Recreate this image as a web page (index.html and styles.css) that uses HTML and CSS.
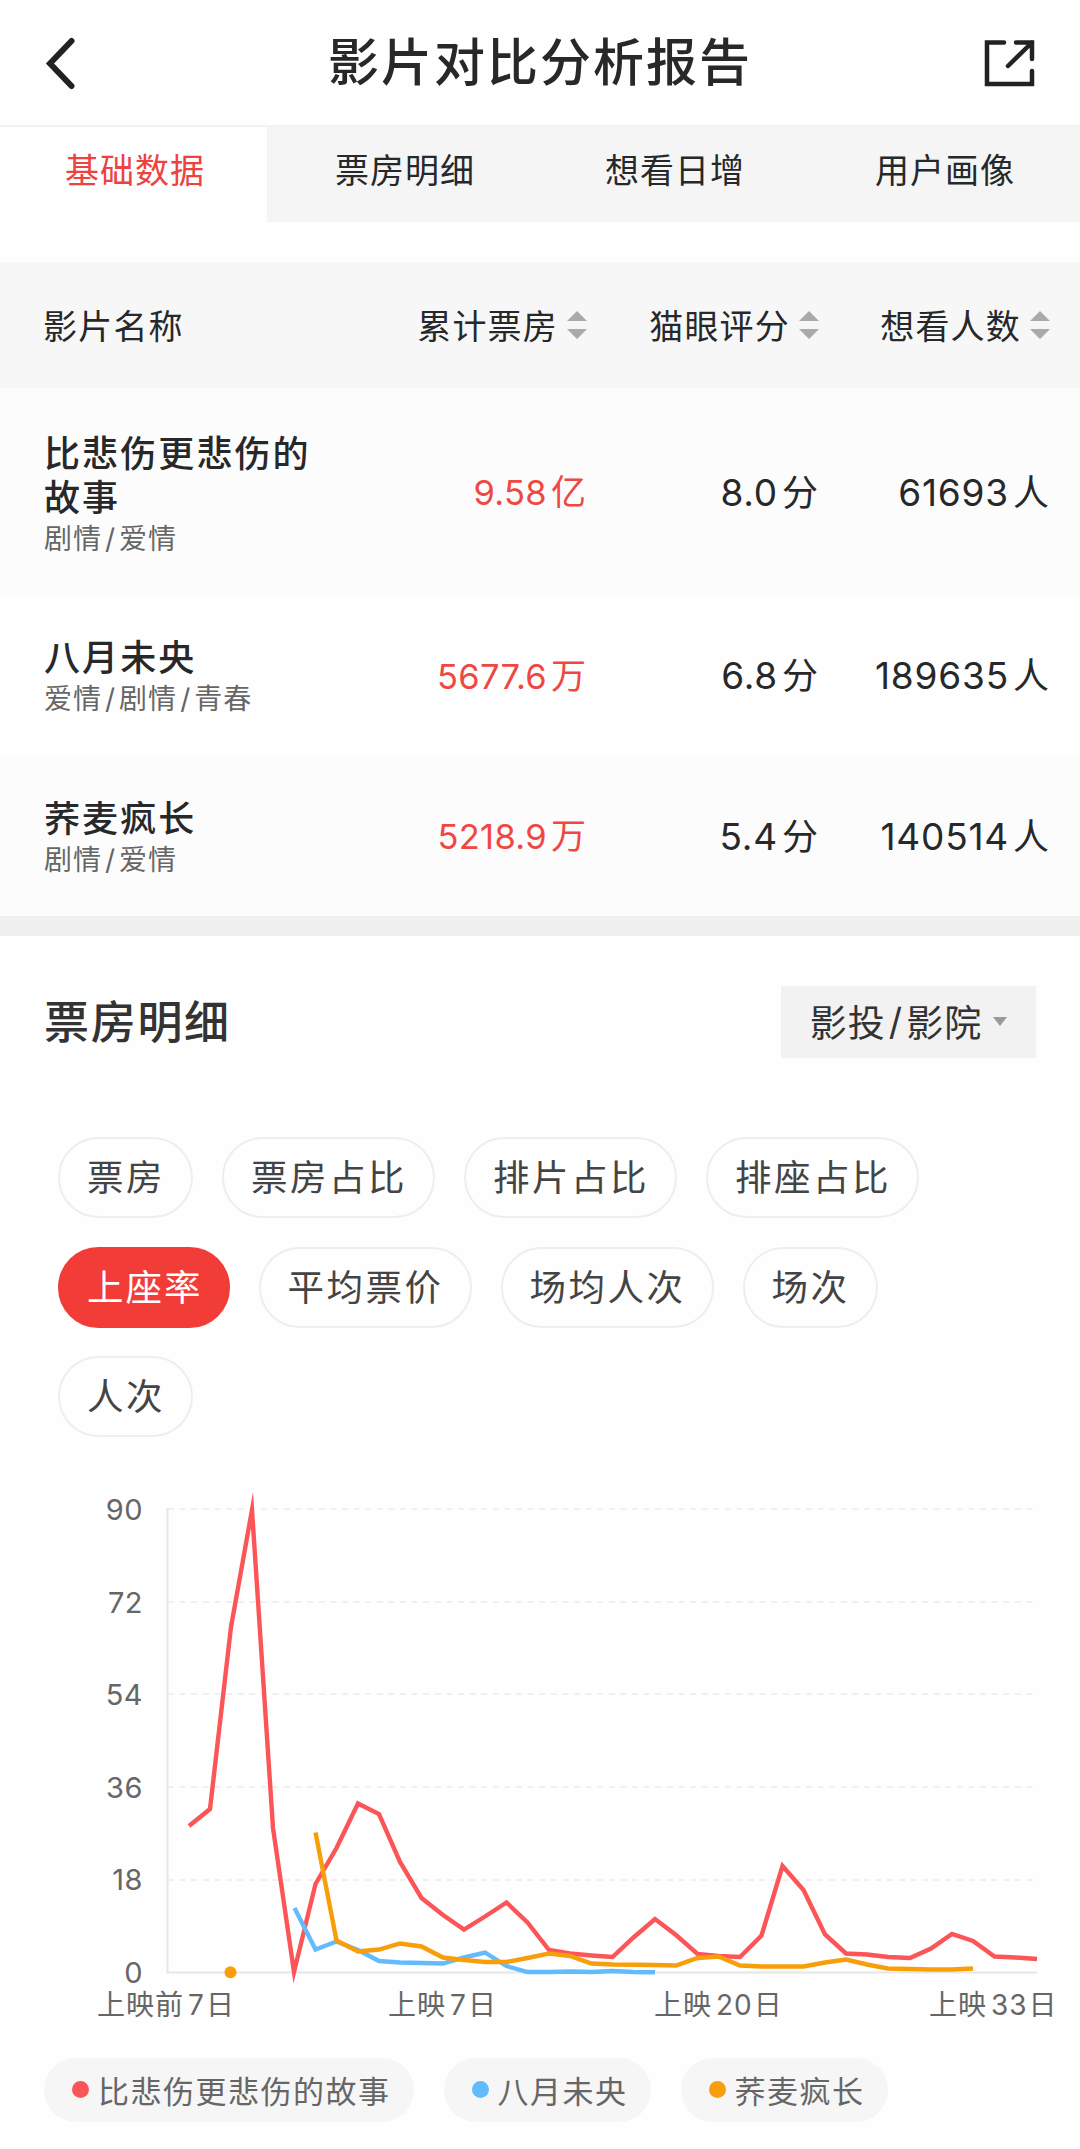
FILE: index.html
```html
<!DOCTYPE html>
<html lang="zh-CN">

<head>
  <meta charset="UTF-8">
  <meta name="viewport" content="width=device-width, initial-scale=1.0">
  <title>影片对比分析报告</title>
  <link rel="stylesheet" href="styles.css">
</head>

<body>
  <header class="topbar">
    <svg class="icon-back" viewBox="0 0 32 54"><path d="M27.5 5 L6 27.5 L27.5 50"/></svg>
    <h1>影片对比分析报告</h1>
    <svg class="icon-share" viewBox="0 0 54 54"><path d="M20 6.5 H3 V48 H48 V35 M32 6.5 H48 V23 M48 6.5 L24 30"/></svg>
  </header>

  <nav class="tabs">
    <a class="tab active">基础数据</a>
    <a class="tab">票房明细</a>
    <a class="tab">想看日增</a>
    <a class="tab">用户画像</a>
  </nav>

  <!-- 影片对比表 -->
  <section class="films">
    <div class="row head">
      <div>影片名称</div>
      <div class="sort">累计票房<i></i></div>
      <div class="sort">猫眼评分<i></i></div>
      <div class="sort">想看人数<i></i></div>
    </div>
    <div class="row tall">
      <div class="film">
        <h3>比悲伤更悲伤的故事</h3>
        <p>剧情<b>/</b>爱情</p>
      </div>
      <div class="num red">9.58<span>亿</span></div>
      <div class="num">8.0<span>分</span></div>
      <div class="num">61693<span>人</span></div>
    </div>
    <div class="row">
      <div class="film">
        <h3>八月未央</h3>
        <p>爱情<b>/</b>剧情<b>/</b>青春</p>
      </div>
      <div class="num red">5677.6<span>万</span></div>
      <div class="num">6.8<span>分</span></div>
      <div class="num">189635<span>人</span></div>
    </div>
    <div class="row">
      <div class="film">
        <h3>荞麦疯长</h3>
        <p>剧情<b>/</b>爱情</p>
      </div>
      <div class="num red">5218.9<span>万</span></div>
      <div class="num">5.4<span>分</span></div>
      <div class="num">140514<span>人</span></div>
    </div>
  </section>

  <!-- 票房明细 -->
  <section class="detail">
    <div class="detail-head">
      <h2>票房明细</h2>
      <button class="select">影投<b>/</b>影院<i></i></button>
    </div>

    <div class="chips">
      <span class="chip">票房</span>
      <span class="chip">票房占比</span>
      <span class="chip">排片占比</span>
      <span class="chip">排座占比</span>
      <span class="chip on">上座率</span>
      <span class="chip">平均票价</span>
      <span class="chip">场均人次</span>
      <span class="chip">场次</span>
      <span class="chip">人次</span>
    </div>

    <svg class="chart" viewBox="0 1480 1080 560">
      <g class="grid">
        <path d="M168 1509 H1037"/>
        <path d="M168 1602 H1037"/>
        <path d="M168 1694 H1037"/>
        <path d="M168 1787 H1037"/>
        <path d="M168 1880 H1037"/>
      </g>
      <path class="axis" d="M167.5 1508 V1972.5 H1037"/>

      <g class="ylabels">
        <text x="143" y="1520">90</text>
        <text x="143" y="1613">72</text>
        <text x="143" y="1705">54</text>
        <text x="143" y="1798">36</text>
        <text x="143" y="1890">18</text>
        <text x="143" y="1983">0</text>
      </g>
      <g class="xlabels">
        <text x="97" y="2015">上映前<tspan dx="4">7</tspan><tspan dx="1">日</tspan></text>
        <text x="388" y="2015">上映<tspan dx="4">7</tspan><tspan dx="1">日</tspan></text>
        <text x="654" y="2015">上映<tspan dx="4">20</tspan><tspan dx="1">日</tspan></text>
        <text x="929" y="2015">上映<tspan dx="4">33</tspan><tspan dx="1">日</tspan></text>
      </g>

      <polyline class="line red-line" points="189,1826 210,1809 231,1627 252,1510 273,1828 294,1972 315.5,1884 336.5,1848 358,1803.5 379,1814 400,1862 421.5,1898 443,1915 464,1929.5 485,1916.5 506.5,1902.5 527.5,1922.5 549,1950 570,1953.5 591.5,1955.5 612.5,1957 633.5,1937.5 655,1919 676,1935 697.5,1954 718.5,1956 740,1957 761.5,1935.5 782.5,1866 803.5,1890 825,1934.5 846,1953.5 867,1954.5 888,1957 910,1958 931,1948.5 952,1934 973,1941 994.5,1956.5 1015.5,1957.5 1037,1959"/>
      <polyline class="line blue-line" points="294.5,1908 315.5,1949.5 336.5,1941.5 358,1950 379,1961 400,1962.5 421.5,1963 443,1963.5 464,1957.5 485,1952.5 506.5,1966 527.5,1972 549,1972 570,1971.5 591.5,1972 612.5,1971 633.5,1972 655,1972.3"/>
      <polyline class="line orange-line" points="315.5,1832.5 336.5,1940.5 358,1951.5 379,1949.5 400,1943.5 421.5,1946.5 443,1957.5 464,1960 485,1962 506.5,1962 527.5,1958 549,1953.5 570,1956 591.5,1963.5 612.5,1964.5 655,1965 676,1965.5 697.5,1958 718.5,1956.5 740,1965.5 761.5,1966.5 803.5,1966.5 825,1962.5 846,1959.5 867,1964.5 888,1968.5 931,1969.5 952,1969.5 973,1968.5"/>
      <circle class="dot" cx="230.5" cy="1972.3" r="6"/>
    </svg>

    <div class="legend">
      <span class="legend-item c-red">比悲伤更悲伤的故事</span>
      <span class="legend-item c-blue">八月未央</span>
      <span class="legend-item c-orange">荞麦疯长</span>
    </div>
  </section>
</body>

</html>
```

FILE: styles.css
```css
* {
  box-sizing: border-box;
  margin: 0;
  padding: 0;
}

body {
  width: 1080px;
  height: 2149px;
  overflow: hidden;
  background: #fefefe;
  color: #26282a;
  font-family: Inter, "Noto Sans CJK SC", sans-serif;
}

b {
  margin: 0 3px;
  font-weight: 400;
}

/* top bar */
.topbar {
  display: flex;
  align-items: center;
  justify-content: space-between;
  height: 127px;
  padding: 0 42px 0 44px;
  border-bottom: 2px solid #f2f2f2;
}

.topbar svg {
  fill: none;
  stroke: #222;
  stroke-width: 4.5;
  stroke-linecap: round;
}

.topbar .icon-back {
  width: 32px;
  height: 54px;
  stroke-width: 6;
}

.icon-share {
  width: 54px;
  height: 54px;
}

h1 {
  margin-left: 20px;
  font-size: 51px;
  font-weight: 500;
  letter-spacing: 2px;
  line-height: 60px;
}

.tabs {
  display: flex;
  height: 95px;
  background: #f5f5f5;
}

.tab {
  width: 270px;
  padding-top: 19px;
  font-size: 34px;
  line-height: 50px;
  letter-spacing: 1px;
  text-align: center;
}

.tab.active {
  width: 267px;
  margin-right: 3px;
  padding-left: 3px;
  background: #fefefe;
  color: #ec4240;
}

/* film table */
.films {
  margin-top: 40px;
  border-bottom: 20px solid #f0f0f0;
}

.row {
  display: grid;
  grid-template-columns: 322px 220px 232px 231px;
  align-items: center;
  height: 160.5px;
  padding-left: 44px;
}

.row.head {
  height: 126px;
  padding: 0 0 2px 43px;
  grid-template-columns: 324px 220px 232px 231px;
  background: #f7f7f7;
  font-size: 34px;
  letter-spacing: 1.2px;
}

.row.tall {
  height: 207px;
}

.row:nth-child(even) {
  background: #fcfcfc;
}

.film {
  padding-top: 4px;
}

.tall .film {
  padding-top: 6px;
}

.film h3 {
  width: 275px;
  font-size: 36px;
  font-weight: 500;
  line-height: 44px;
  letter-spacing: 2.1px;
}

.film p {
  color: #666;
  font-size: 28px;
  line-height: 38px;
  letter-spacing: 1px;
}

.sort {
  display: flex;
  align-items: center;
  justify-content: flex-end;
}

.sort i {
  width: 20px;
  height: 28px;
  margin: 2px 0 0 9px;
  background: #aaa;
  clip-path: polygon(50% 0, 100% 36%, 0 36%, 0 64%, 100% 64%, 50% 100%, 0 64%, 0 36%);
}

.num {
  padding-bottom: 4px;
  font-size: 37px;
  letter-spacing: 0.8px;
  text-align: right;
  white-space: nowrap;
}

.num span {
  margin-left: 4px;
  font-size: 36px;
  letter-spacing: 0;
}

.num.red {
  color: #ef4742;
  font-size: 34.5px;
  letter-spacing: 0.3px;
}

.num.red span {
  font-size: 35px;
}

/* box office detail */
.detail-head {
  display: flex;
  align-items: center;
  justify-content: space-between;
  height: 72px;
  margin: 50px 44px 0;
}

h2 {
  padding-bottom: 5px;
  color: #333;
  font-size: 45px;
  font-weight: 500;
  letter-spacing: 1.7px;
}

.select {
  display: flex;
  align-items: center;
  justify-content: center;
  width: 255px;
  height: 72px;
  padding-bottom: 2px;
  border: none;
  background: #f2f2f2;
  color: #333;
  font: inherit;
  font-size: 37px;
  letter-spacing: 1px;
}

.select i {
  margin-left: 11px;
  border: 7px solid transparent;
  border-top: 9px solid #999;
  border-bottom: 0;
}

.chips {
  display: flex;
  flex-wrap: wrap;
  gap: 28.5px 29px;
  margin: 79px 90px 0 58px;
}

.chip {
  height: 81px;
  padding: 1px 26px 0 27px;
  border: 2px solid #eee;
  border-radius: 41px;
  color: #444;
  font-size: 36.5px;
  line-height: 77px;
  letter-spacing: 2.5px;
}

.chip.on {
  padding: 1px 25px 0 27px;
  border-color: #f23c38;
  background: #f23c38;
  color: #fff;
  letter-spacing: 2px;
}

.chart {
  display: block;
  width: 1080px;
  height: 560px;
  margin-top: 43px;
}

.grid path {
  stroke: #f0f0f0;
  stroke-width: 2;
  stroke-dasharray: 6 5.6;
}

.axis {
  fill: none;
  stroke: #e6e6e6;
  stroke-width: 2;
}

.ylabels,
.xlabels {
  fill: #666;
  font-size: 29px;
  letter-spacing: 0.5px;
}

.ylabels {
  text-anchor: end;
}

.xlabels {
  font-size: 28px;
  letter-spacing: 1px;
}

.line {
  fill: none;
  stroke-width: 4.4;
  stroke-miterlimit: 12;
}

.red-line {
  stroke: #fb5558;
}

.blue-line {
  stroke: #62bbfc;
}

.orange-line {
  stroke: #f89e0b;
}

.dot {
  fill: #f89e0b;
}

.legend {
  display: flex;
  gap: 30px;
  margin: 18px 44px 0;
}

.legend-item {
  display: flex;
  align-items: center;
  height: 64px;
  padding: 0 23px 2px 28px;
  border-radius: 32px;
  background: #f6f6f6;
  color: #666;
  font-size: 31px;
  letter-spacing: 1.5px;
}

.legend-item::before {
  content: "";
  width: 17px;
  height: 17px;
  margin-right: 9px;
  border-radius: 50%;
}

.c-red::before {
  background: #fb5558;
}

.c-blue::before {
  background: #62bbfc;
}

.c-orange::before {
  background: #f89e0b;
}
```
